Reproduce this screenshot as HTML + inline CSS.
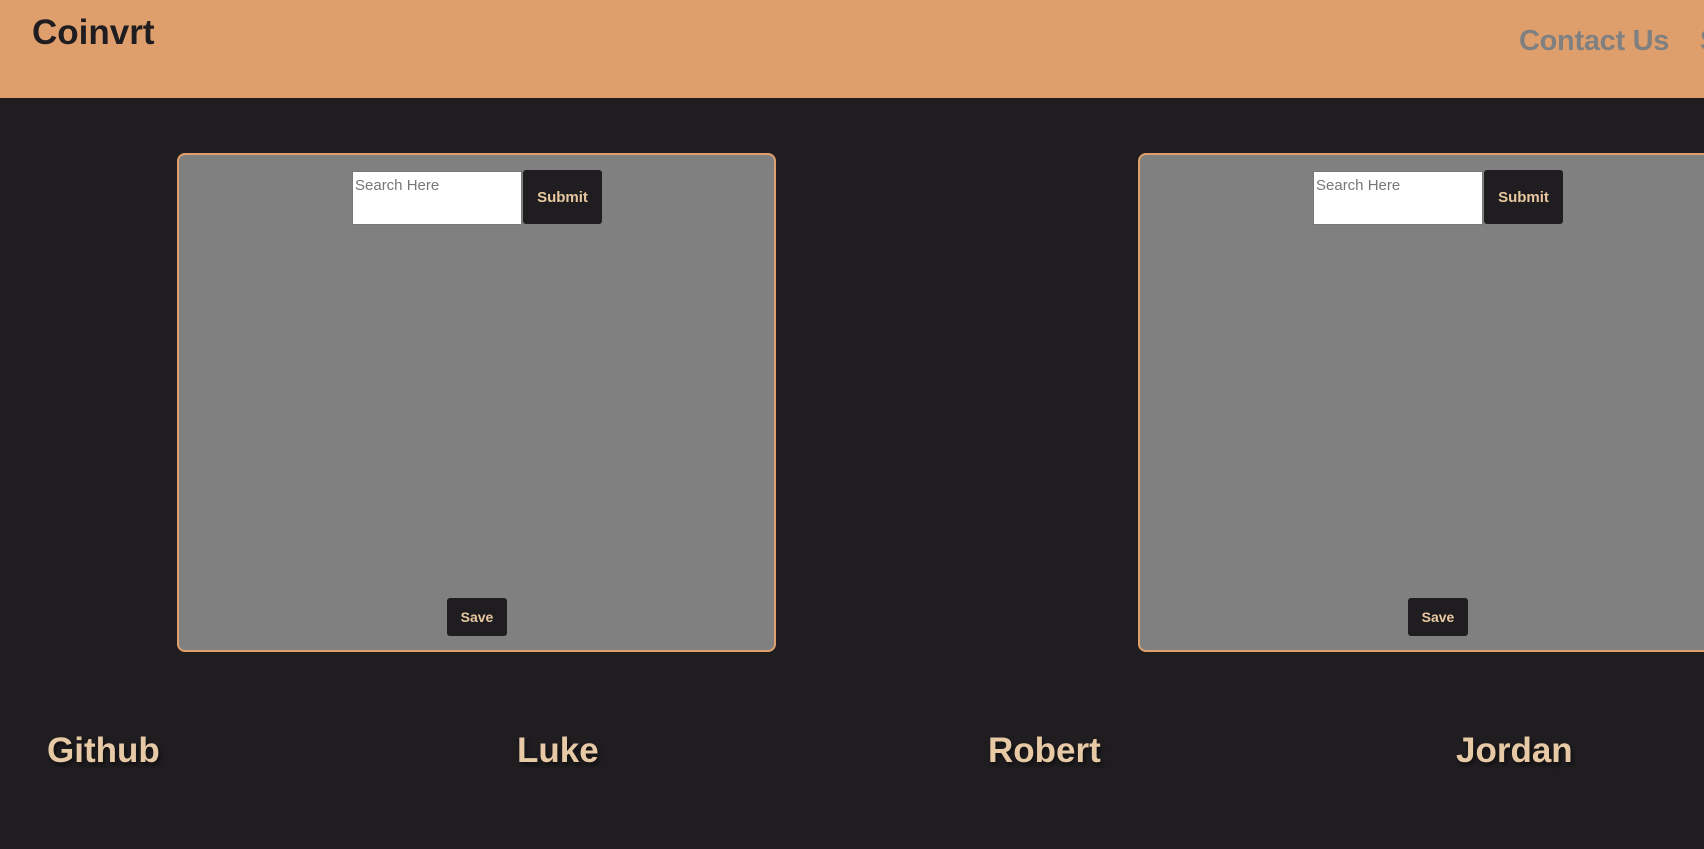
<!DOCTYPE html>
<html><head><style>
body{margin:0;width:1704px;height:849px;overflow:hidden;background:#1f1d20;font-family:"Liberation Sans",sans-serif;position:relative}
.hdr{position:absolute;left:0;top:0;width:1704px;height:98px;background:#df9f6d}
.logo{position:absolute;left:32px;top:13px;font-size:35px;font-weight:bold;color:#1f1d20}
.nav{position:absolute;top:25px;font-size:29px;font-weight:bold;color:#808080;white-space:nowrap;letter-spacing:-0.3px}
.card{position:absolute;top:153px;width:599px;height:499px;background:#808080;border:2px solid #e0a06c;border-radius:8px;box-sizing:border-box}
.ta{position:absolute;top:16px;width:170px;height:54px;background:#fff;border:1px solid #777;box-sizing:border-box;font-size:15px;color:#777;padding:5px 2px}
.btn{position:absolute;background:#1f1d20;color:#e8c8a0;font-weight:bold;border-radius:3px;display:flex;align-items:center;justify-content:center}
.name{position:absolute;top:731px;font-size:35px;font-weight:bold;color:#e8c9a6;text-shadow:2px 3px 4px rgba(0,0,0,.5)}
</style></head><body>
<div class="hdr"><div class="logo">Coinvrt</div><div class="nav" style="left:1519px">Contact Us</div><div class="nav" style="left:1700px">S</div></div>
<div class="card" style="left:177px">
 <div class="ta" style="left:173px">Search Here</div>
 <div class="btn" style="left:344px;top:15px;width:79px;height:54px;font-size:15px">Submit</div>
 <div class="btn" style="left:268px;top:443px;width:60px;height:38px;font-size:14px">Save</div>
</div>
<div class="card" style="left:1138px">
 <div class="ta" style="left:173px">Search Here</div>
 <div class="btn" style="left:344px;top:15px;width:79px;height:54px;font-size:15px">Submit</div>
 <div class="btn" style="left:268px;top:443px;width:60px;height:38px;font-size:14px">Save</div>
</div>
<div class="name" style="left:47px">Github</div>
<div class="name" style="left:517px">Luke</div>
<div class="name" style="left:988px">Robert</div>
<div class="name" style="left:1456px">Jordan</div>
</body></html>
